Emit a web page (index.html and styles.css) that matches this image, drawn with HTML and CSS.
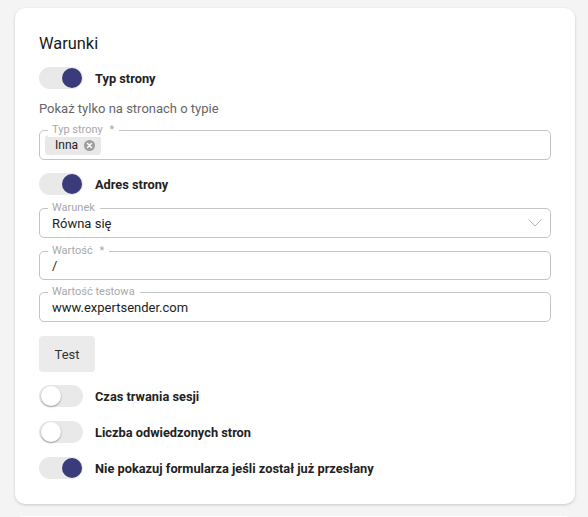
FILE: index.html
```html
<!DOCTYPE html>
<html lang="pl">
<head>
<meta charset="utf-8">
<link rel="stylesheet" href="styles.css">
</head>
<body>
<div class="card">
  <h2 class="title">Warunki</h2>

  <div class="switch-row">
    <span class="switch on"><span class="thumb"></span></span>
    <span class="switch-label">Typ strony</span>
  </div>

  <div class="helper">Pokaż tylko na stronach o typie</div>

  <div class="field">
    <span class="field-label">Typ strony <span class="req">*</span></span>
    <span class="chip">Inna
      <svg class="chip-x" width="11" height="11" viewBox="0 0 10 10"><circle cx="5" cy="5" r="5" fill="#9e9e9e"/><path d="M3.2 3.2 L6.8 6.8 M6.8 3.2 L3.2 6.8" stroke="#fff" stroke-width="1.3" stroke-linecap="round"/></svg>
    </span>
  </div>

  <div class="switch-row">
    <span class="switch on"><span class="thumb"></span></span>
    <span class="switch-label">Adres strony</span>
  </div>

  <div class="field select">
    <span class="field-label">Warunek</span>
    <span class="value">Równa się</span>
    <svg class="chevron" width="14" height="8" viewBox="0 0 14 8"><path d="M0.5 0.5 L7 7 L13.5 0.5" fill="none" stroke="#a9bcb6" stroke-width="1"/></svg>
  </div>

  <div class="field shifted">
    <span class="field-label">Wartość <span class="req">*</span></span>
    <span class="value">/</span>
  </div>

  <div class="field">
    <span class="field-label">Wartość testowa</span>
    <span class="value">www.expertsender.com</span>
  </div>

  <button class="btn">Test</button>

  <div class="switch-row">
    <span class="switch"><span class="thumb"></span></span>
    <span class="switch-label">Czas trwania sesji</span>
  </div>

  <div class="switch-row">
    <span class="switch"><span class="thumb"></span></span>
    <span class="switch-label">Liczba odwiedzonych stron</span>
  </div>

  <div class="switch-row">
    <span class="switch on"><span class="thumb"></span></span>
    <span class="switch-label">Nie pokazuj formularza jeśli został już przesłany</span>
  </div>
</div>
<div class="card next"></div>
</body>
</html>
```

FILE: styles.css
```css
html, body {
  margin: 0;
  padding: 0;
  background: #f4f4f4;
  font-family: Roboto, "Liberation Sans", Arial, sans-serif;
  color: #222;
}
body {
  padding: 8px 13px 0 15px;
  height: 517px;
  box-sizing: border-box;
  overflow: hidden;
}
.card {
  box-sizing: border-box;
  width: 560px;
  height: 496px;
  background: #fff;
  border-radius: 10px;
  box-shadow: 0 1px 3px rgba(0,0,0,0.18);
  padding: 26px 24px 24px;
  display: flex;
  flex-direction: column;
  gap: 12px;
}
.card.next {
  margin: 12px 0 0 5px;
  width: 548px;
  height: 4px;
  padding: 0;
  box-shadow: none;
}
.title {
  margin: 0;
  font-size: 16.4px;
  line-height: 20px;
  font-weight: 400;
  color: #1a1a1a;
}
.switch-row {
  display: flex;
  align-items: center;
  gap: 12px;
  height: 24px;
}
.switch {
  position: relative;
  width: 44px;
  height: 22px;
  border-radius: 11px;
  background: #e9e9e9;
  flex: none;
}
.thumb {
  position: absolute;
  top: 1px;
  left: 2px;
  width: 20px;
  height: 20px;
  border-radius: 50%;
  background: #fff;
  box-shadow: 0 1px 2px rgba(0,0,0,0.35);
}
.switch.on .thumb {
  left: 23px;
  background: #393b7b;
  box-shadow: none;
}
.switch-label {
  font-size: 12.8px;
  font-weight: 700;
  color: #222;
}
.helper {
  margin-top: -2px;
  font-size: 13px;
  line-height: 18px;
  color: #666;
}
.field {
  position: relative;
  box-sizing: border-box;
  height: 30px;
  border: 1px solid #c4c4c4;
  border-radius: 5px;
  display: flex;
  align-items: center;
  padding: 0 12px;
}
.field.shifted {
  margin-top: 1px;
  height: 29px;
}
.field-label {
  position: absolute;
  top: -8px;
  left: 8px;
  padding: 0 5px 0 4px;
  background: #fff;
  font-size: 11px;
  line-height: 14px;
  color: #a8a8a8;
}
.req {
  margin-left: 4px;
}
.value {
  font-size: 13px;
  color: #222;
}
.chip {
  margin-left: -7px;
  height: 20px;
  box-sizing: border-box;
  padding: 0 6px 0 10px;
  border-radius: 4px;
  background: #e8e8e8;
  display: inline-flex;
  align-items: center;
  gap: 6px;
  font-size: 12px;
  color: #222;
}
.select {
  justify-content: space-between;
}
.chevron {
  margin-right: -4px;
}
.btn {
  margin-top: 2px;
  align-self: flex-start;
  width: 56px;
  height: 36px;
  border: none;
  border-radius: 4px;
  background: #ebebeb;
  font-family: inherit;
  font-size: 13px;
  color: #333;
  padding: 0;
}
```
